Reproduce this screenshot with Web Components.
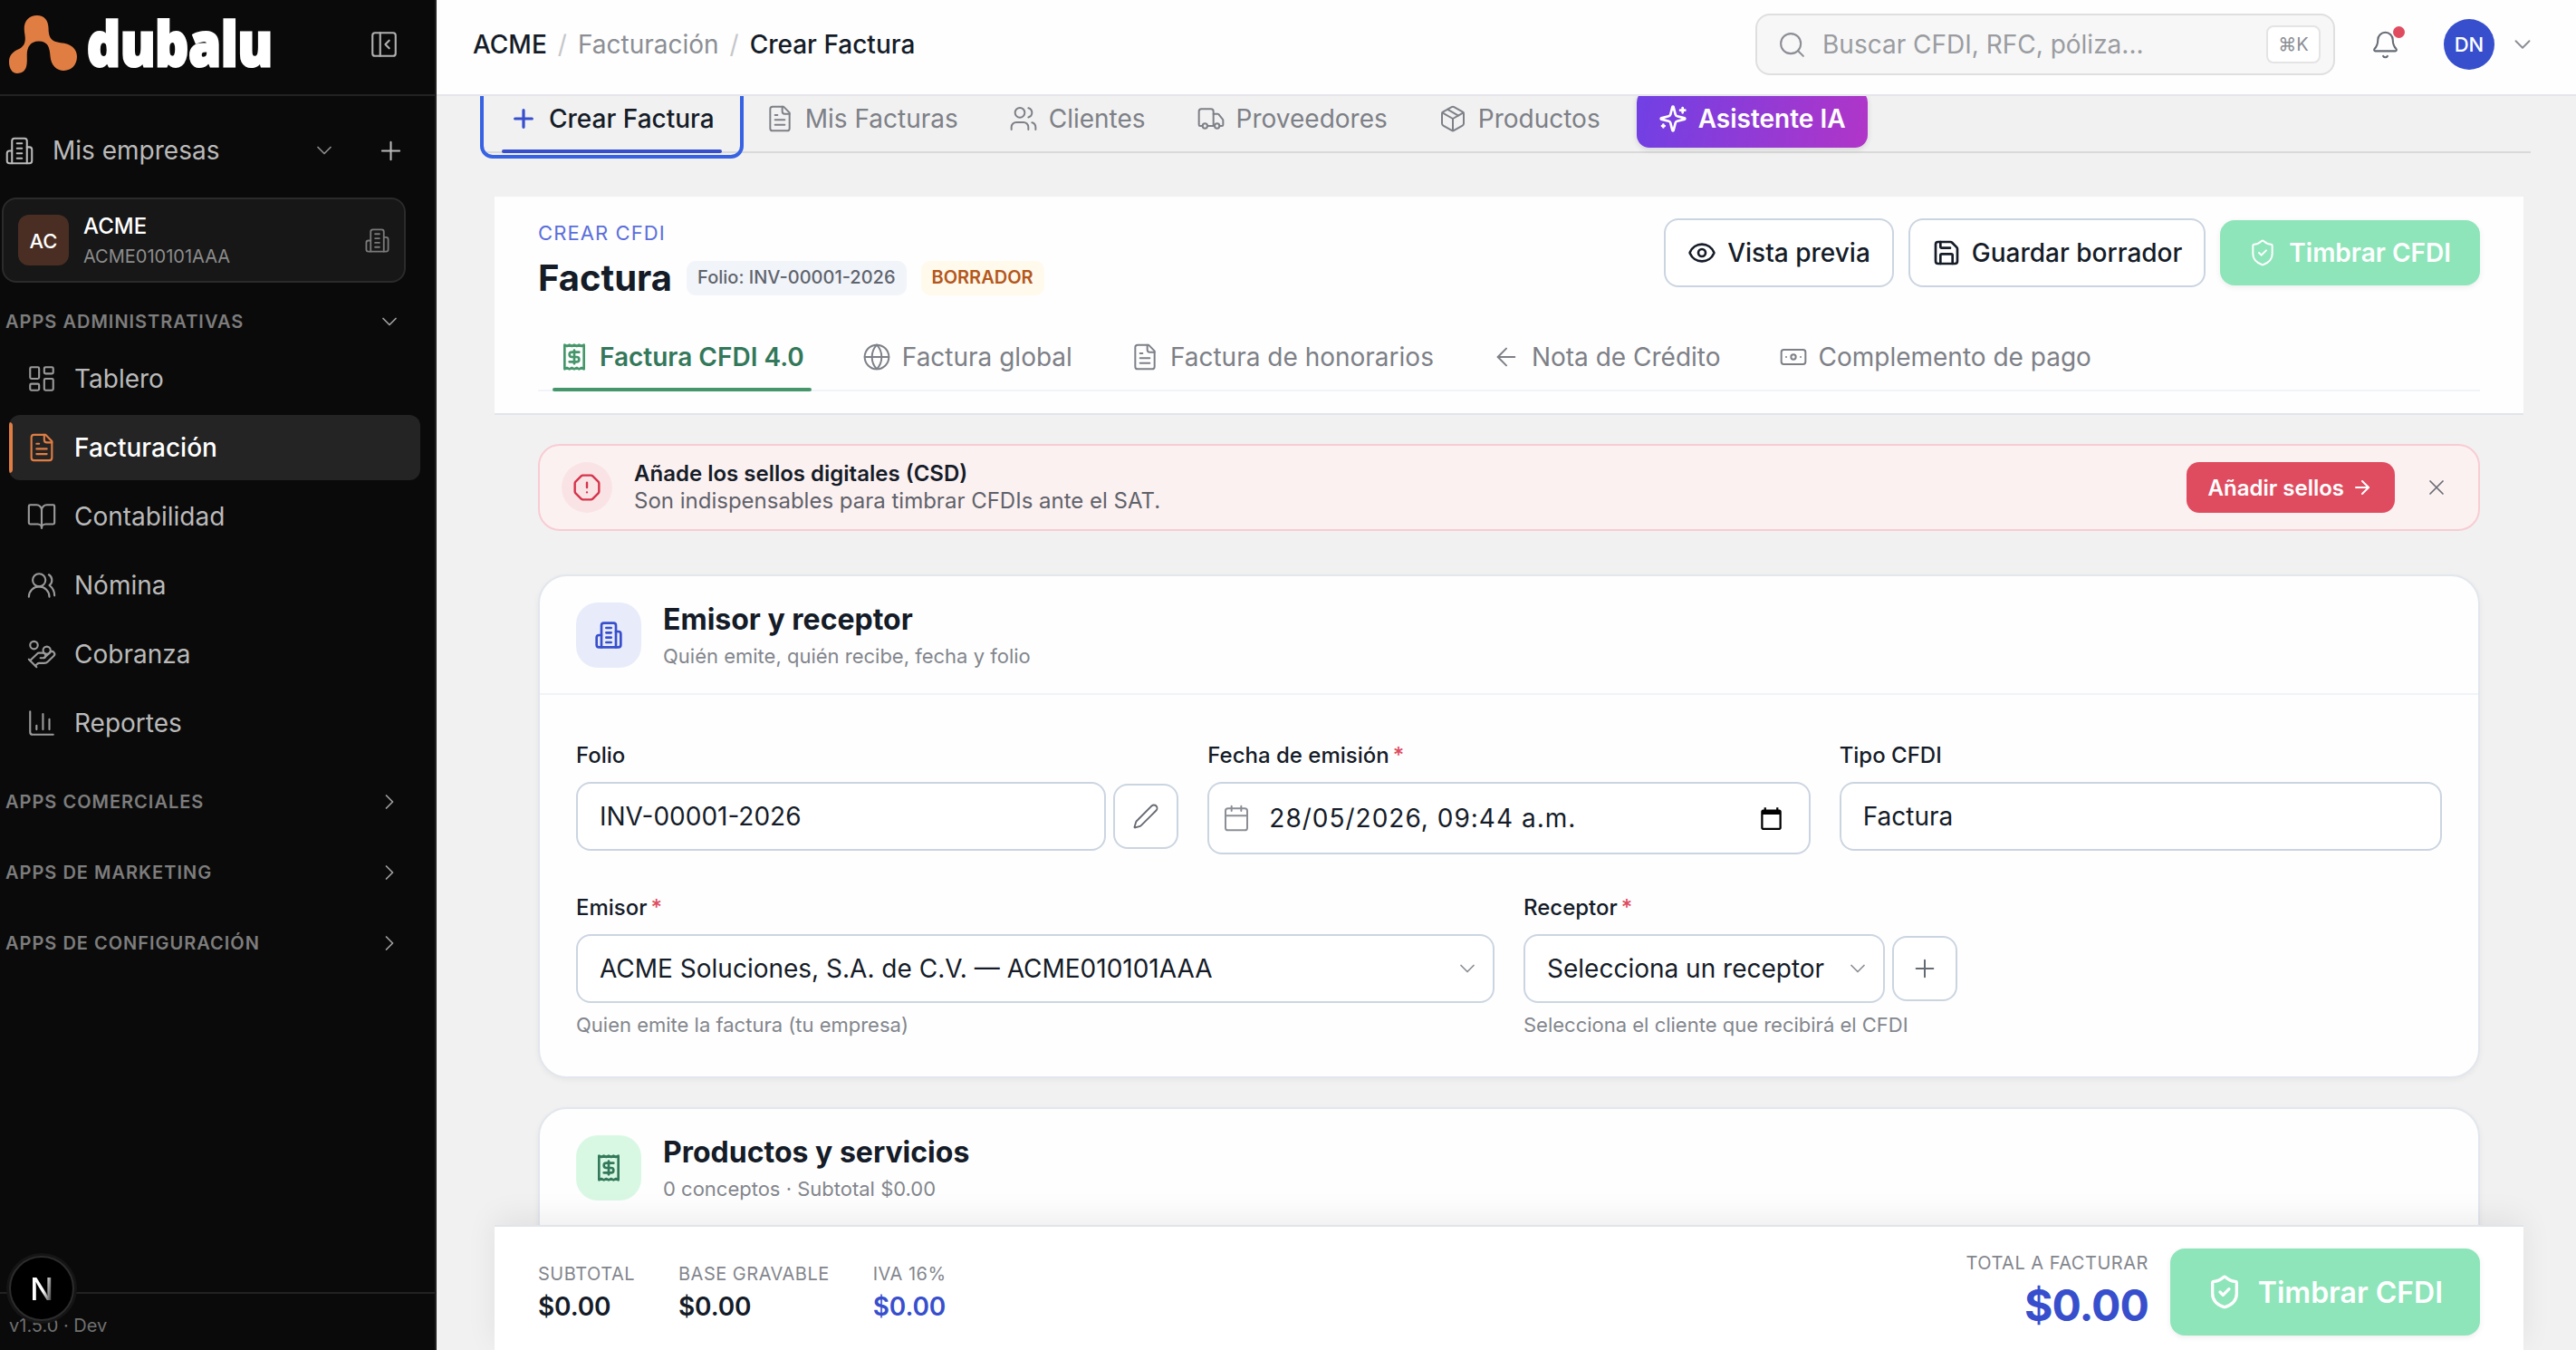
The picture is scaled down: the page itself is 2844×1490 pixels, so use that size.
<!DOCTYPE html>
<html lang="es">
<head>
<meta charset="utf-8">
<title>Crear Factura</title>
<style>
  body {
    margin: 0;
    width: 2844px;
    height: 1490px;
    overflow: hidden;
    font-family: Inter, "Liberation Sans", sans-serif;
    font-optical-sizing: none;
    font-size: 28px;
    color: #151c28;
    background: #f1f1f1;
  }
</style>
</head>
<body>
<invoice-app></invoice-app>

<script>
const ICONS = {
  building: '<path d="M6 22V4a2 2 0 0 1 2-2h8a2 2 0 0 1 2 2v18Z"/><path d="M6 12H4a2 2 0 0 0-2 2v6a2 2 0 0 0 2 2h2"/><path d="M18 9h2a2 2 0 0 1 2 2v9a2 2 0 0 1-2 2h-2"/><path d="M10 6h4M10 10h4M10 14h4M10 18h4"/>',
  panel: '<rect width="18" height="18" x="3" y="3" rx="2"/><path d="M9 3v18"/><path d="m16 15-3-3 3-3"/>',
  down: '<path d="m6 9 6 6 6-6"/>',
  right: '<path d="m9 18 6-6-6-6"/>',
  plus: '<path d="M5 12h14M12 5v14"/>',
  x: '<path d="M18 6 6 18M6 6l12 12"/>',
  dashboard: '<rect width="7" height="9" x="3" y="3" rx="1"/><rect width="7" height="5" x="14" y="3" rx="1"/><rect width="7" height="9" x="14" y="12" rx="1"/><rect width="7" height="5" x="3" y="16" rx="1"/>',
  file: '<path d="M15 2H6a2 2 0 0 0-2 2v16a2 2 0 0 0 2 2h12a2 2 0 0 0 2-2V7Z"/><path d="M14 2v4a2 2 0 0 0 2 2h4"/><path d="M10 9H8M16 13H8M16 17H8"/>',
  book: '<path d="M12 7v14"/><path d="M3 18a1 1 0 0 1-1-1V4a1 1 0 0 1 1-1h5a4 4 0 0 1 4 4 4 4 0 0 1 4-4h5a1 1 0 0 1 1 1v13a1 1 0 0 1-1 1h-6a3 3 0 0 0-3 3 3 3 0 0 0-3-3z"/>',
  people: '<path d="M18 21a8 8 0 0 0-16 0"/><circle cx="10" cy="8" r="5"/><path d="M22 20c0-3.37-2-6.5-4-8a5 5 0 0 0-.45-8.3"/>',
  coins: '<path d="M11 15h2a2 2 0 1 0 0-4h-3c-.6 0-1.1.2-1.4.6L3 17"/><path d="m7 21 1.6-1.4c.3-.4.8-.6 1.4-.6h4c1.1 0 2.1-.4 2.8-1.2l4.6-4.4a2 2 0 0 0-2.75-2.91l-4.2 3.9"/><path d="m2 16 6 6"/><circle cx="16" cy="9" r="2.9"/><circle cx="6" cy="5" r="3"/>',
  chart: '<path d="M3 3v16a2 2 0 0 0 2 2h16"/><path d="M18 17V9M13 17V5M8 17v-3"/>',
  search: '<path d="m21 21-4.34-4.34"/><circle cx="11" cy="11" r="8"/>',
  bell: '<path d="M10.268 21a2 2 0 0 0 3.464 0"/><path d="M3.262 15.326A1 1 0 0 0 4 17h16a1 1 0 0 0 .74-1.673C19.41 13.956 18 12.499 18 8A6 6 0 0 0 6 8c0 4.499-1.411 5.956-2.738 7.326"/>',
  users: '<path d="M16 21v-2a4 4 0 0 0-4-4H6a4 4 0 0 0-4 4v2"/><circle cx="9" cy="7" r="4"/><path d="M22 21v-2a4 4 0 0 0-3-3.87"/><path d="M16 3.13a4 4 0 0 1 0 7.75"/>',
  truck: '<path d="M14 18V6a2 2 0 0 0-2-2H4a2 2 0 0 0-2 2v11a1 1 0 0 0 1 1h2"/><path d="M15 18H9"/><path d="M19 18h2a1 1 0 0 0 1-1v-3.65a1 1 0 0 0-.22-.624l-3.48-4.35A1 1 0 0 0 17.52 8H14"/><circle cx="17" cy="18" r="2"/><circle cx="7" cy="18" r="2"/>',
  box: '<path d="M11 21.73a2 2 0 0 0 2 0l7-4A2 2 0 0 0 21 16V8a2 2 0 0 0-1-1.73l-7-4a2 2 0 0 0-2 0l-7 4A2 2 0 0 0 3 8v8a2 2 0 0 0 1 1.73z"/><path d="M12 22V12"/><path d="M3.29 7 12 12l8.71-5"/><path d="m7.5 4.27 9 5.15"/>',
  sparkles: '<path d="M9.937 15.5A2 2 0 0 0 8.5 14.063l-6.135-1.582a.5.5 0 0 1 0-.962L8.5 9.936A2 2 0 0 0 9.937 8.5l1.582-6.135a.5.5 0 0 1 .963 0L14.063 8.5A2 2 0 0 0 15.5 9.937l6.135 1.581a.5.5 0 0 1 0 .964L15.5 14.063a2 2 0 0 0-1.437 1.437l-1.582 6.135a.5.5 0 0 1-.963 0z"/><path d="M20 3v4M22 5h-4M4 17v2M5 18H3"/>',
  eye: '<path d="M2.062 12.348a1 1 0 0 1 0-.696 10.75 10.75 0 0 1 19.876 0 1 1 0 0 1 0 .696 10.75 10.75 0 0 1-19.876 0"/><circle cx="12" cy="12" r="3"/>',
  save: '<path d="M15.2 3a2 2 0 0 1 1.4.6l3.8 3.8a2 2 0 0 1 .6 1.4V19a2 2 0 0 1-2 2H5a2 2 0 0 1-2-2V5a2 2 0 0 1 2-2z"/><path d="M17 21v-7a1 1 0 0 0-1-1H8a1 1 0 0 0-1 1v7"/><path d="M7 3v4a1 1 0 0 0 1 1h7"/>',
  shield: '<path d="M20 13c0 5-3.5 7.5-7.66 8.95a1 1 0 0 1-.67-.01C7.5 20.5 4 18 4 13V6a1 1 0 0 1 1-1c2 0 4.5-1.2 6.24-2.72a1.17 1.17 0 0 1 1.52 0C14.51 3.81 17 5 19 5a1 1 0 0 1 1 1z"/><path d="m9 12 2 2 4-4"/>',
  receipt: '<path d="M4 2v20l2-1 2 1 2-1 2 1 2-1 2 1 2-1 2 1V2l-2 1-2-1-2 1-2-1-2 1-2-1-2 1Z"/><path d="M16 8h-6a2 2 0 1 0 0 4h4a2 2 0 1 1 0 4H8"/><path d="M12 17.5v-11"/>',
  globe: '<circle cx="12" cy="12" r="10"/><path d="M12 2a14.5 14.5 0 0 0 0 20 14.5 14.5 0 0 0 0-20"/><path d="M2 12h20"/>',
  back: '<path d="m12 19-7-7 7-7"/><path d="M19 12H5"/>',
  forward: '<path d="M5 12h14"/><path d="m12 5 7 7-7 7"/>',
  banknote: '<rect width="20" height="12" x="2" y="6" rx="2"/><circle cx="12" cy="12" r="2"/><path d="M6 12h.01M18 12h.01"/>',
  alert: '<path d="M12 16h.01M12 8v4"/><path d="M15.312 2a2 2 0 0 1 1.414.586l4.688 4.688A2 2 0 0 1 22 8.688v6.624a2 2 0 0 1-.586 1.414l-4.688 4.688a2 2 0 0 1-1.414.586H8.688a2 2 0 0 1-1.414-.586l-4.688-4.688A2 2 0 0 1 2 15.312V8.688a2 2 0 0 1 .586-1.414l4.688-4.688A2 2 0 0 1 8.688 2z"/>',
  pencil: '<path d="M21.174 6.812a1 1 0 0 0-3.986-3.987L3.842 16.174a2 2 0 0 0-.5.83l-1.321 4.352a.5.5 0 0 0 .623.622l4.353-1.32a2 2 0 0 0 .83-.497z"/>',
  calendar: '<path d="M8 2v4M16 2v4"/><rect width="18" height="18" x="3" y="4" rx="2"/><path d="M3 10h18"/>',
  picker: '<path fill="currentColor" stroke="none" d="M20 3h-1V1h-2v2H7V1H5v2H4c-1.1 0-2 .9-2 2v16c0 1.1.9 2 2 2h16c1.1 0 2-.9 2-2V5c0-1.1-.9-2-2-2zm0 18H4V8h16v13z"/>'
};

// Small helper so each element is just a name, its styles and its markup
function define(name, css, html) {
  customElements.define(name, class extends HTMLElement {
    connectedCallback() {
      if (this.shadowRoot) return;
      const root = this.attachShadow({ mode: 'open' });
      const attr = (key, fallback = '') => this.getAttribute(key) || fallback;
      root.innerHTML = `<style>*{box-sizing:border-box}:host{box-sizing:border-box}${css}</style>${typeof html === 'function' ? html(attr, this) : html}`;
    }
  });
}

define('ui-icon', `
  :host { display: inline-flex; flex: none; }
  svg { display: block; fill: none; stroke: currentColor; stroke-linecap: round; stroke-linejoin: round; }
`, (attr) => `<svg width="${attr('size', '32')}" height="${attr('size', '32')}" viewBox="0 0 24 24" stroke-width="${attr('weight', '1.5')}">${ICONS[attr('name')]}</svg>`);

/* ---------- Sidebar ---------- */

define('brand-logo', `
  :host { display: flex; align-items: center; gap: 8px; height: 104px; }
  svg { display: block; }
  .mark { margin-top: -7px; }
  text { font: 800 67px "Open Sans", sans-serif; fill: #fff; stroke: #fff; stroke-width: 3px; }
`, `
  <svg class="mark" width="75" height="64" viewBox="30 50 224 191"><path fill="#e07d43" d="M122 50C147 50 160 68 160 92C160 125 170 137 200 140C235 143 254 160 254 186C254 214 235 232 211 232C185 232 168 212 166 185C164 155 158 135 128 135C100 135 89 155 89 180C89 195 90 205 87 218C83 235 70 241 57 241C40 241 30 225 30 203C30 182 42 170 60 162C80 152 84 140 83 122C82 110 80 105 80 92C80 68 97 50 122 50Z"/></svg>
  <svg width="216" height="104" viewBox="0 0 216 104"><text x="3" y="73" textLength="205" lengthAdjust="spacingAndGlyphs">dubalu</text></svg>
`);

define('company-card', `
  :host { display: flex; align-items: center; width: 446px; height: 94px; padding: 0 15px 0 16px; margin: 22px 0 0 2px; background: #171717; border: 2px solid #2b2b2b; border-radius: 16px; }
  .avatar { width: 56px; height: 56px; border-radius: 12px; background: #4a2e23; color: #fff; font-size: 22px; font-weight: 500; line-height: 58px; text-align: center; }
  .info { flex: 1; margin-left: 16px; padding-top: 3px; }
  .name { font-size: 24px; font-weight: 500; line-height: 32px; color: #fff; }
  .rfc { font-size: 20px; line-height: 34px; color: #8c8c8c; }
  ui-icon { color: #7a7a7a; }
`, `
  <div class="avatar">AC</div>
  <div class="info"><div class="name">ACME</div><div class="rfc">ACME010101AAA</div></div>
  <ui-icon name="building" size="29"></ui-icon>
`);

define('nav-section', `
  :host { display: flex; align-items: center; justify-content: space-between; height: 44px; margin: 34px 36px 0 6px; font-size: 20px; font-weight: 600; letter-spacing: 1px; color: #7d7d7d; }
  ui-icon { color: #a0a0a0; }
`, (attr) => `<slot></slot><ui-icon name="${attr('icon', 'right')}" size="28"></ui-icon>`);

define('nav-item', `
  :host { display: flex; align-items: center; position: relative; height: 72px; margin: 0 16px 4px 10px; padding-left: 19px; gap: 19px; border-radius: 12px; color: #bababa; overflow: hidden; }
  ui-icon { color: #9a9a9a; }
  :host([active]) { background: #242424; color: #fff; font-weight: 500; }
  :host([active]) ui-icon { color: #e07d43; }
  :host([active])::before { content: ""; position: absolute; left: 0; top: 8px; width: 4px; height: 56px; background: #e07d43; border-radius: 0 4px 4px 0; }
`, (attr) => `<ui-icon name="${attr('icon')}" size="34"></ui-icon><span><slot></slot></span>`);

define('app-sidebar', `
  :host { display: flex; flex-direction: column; position: relative; flex: none; width: 482px; height: 1490px; background: #0a0a0a; border-right: 2px solid #222; }
  .head { display: flex; align-items: center; justify-content: space-between; height: 106px; padding: 0 39px 0 10px; border-bottom: 2px solid #222; color: #b0b0b0; }
  .head ui-icon { margin-top: -6px; }
  .mine { display: flex; align-items: center; height: 60px; margin-top: 30px; padding: 0 32px 0 5px; color: #bababa; }
  .mine span { flex: 1; margin-left: 20px; }
  .mine .chev { margin-right: 43px; color: #8c8c8c; }
  nav { margin-top: 5px; }
  .version { height: 64px; margin-top: auto; padding: 17px 0 0 10px; border-top: 2px solid #222; font-size: 20px; line-height: 36px; color: #707070; }
  .dev { position: absolute; left: 10px; top: 1386px; width: 72px; height: 72px; border-radius: 50%; background: #000; border: 2px solid #2c2c2c; box-shadow: 0 0 0 3px #151515; font-size: 34px; font-weight: 500; line-height: 69px; text-align: center; }
  .dev span { background: linear-gradient(100deg, #fff 55%, #555 85%); -webkit-background-clip: text; background-clip: text; color: transparent; }
`, `
  <div class="head"><brand-logo></brand-logo><ui-icon name="panel" size="34"></ui-icon></div>
  <div class="mine"><ui-icon name="building" size="33"></ui-icon><span>Mis empresas</span><ui-icon class="chev" name="down" size="28"></ui-icon><ui-icon name="plus" size="33"></ui-icon></div>
  <company-card></company-card>
  <nav-section icon="down" style="margin-top:21px">APPS ADMINISTRATIVAS</nav-section>
  <nav>
    <nav-item icon="dashboard">Tablero</nav-item>
    <nav-item icon="file" active>Facturación</nav-item>
    <nav-item icon="book">Contabilidad</nav-item>
    <nav-item icon="people">Nómina</nav-item>
    <nav-item icon="coins">Cobranza</nav-item>
    <nav-item icon="chart">Reportes</nav-item>
  </nav>
  <nav-section style="margin-top:25px">APPS COMERCIALES</nav-section>
  <nav-section>APPS DE MARKETING</nav-section>
  <nav-section>APPS DE CONFIGURACIÓN</nav-section>
  <div class="version">v1.5.0 · Dev</div>
  <div class="dev"><span>N</span></div>
`);

/* ---------- Top bar ---------- */

define('app-topbar', `
  :host { display: flex; align-items: center; position: relative; z-index: 3; flex: none; height: 106px; padding: 0 44px 6px 40px; background: #fefefe; border-bottom: 2px solid #e4e6ea; }
  .crumbs { display: flex; gap: 12px; flex: 1; font-weight: 500; }
  .crumbs i { font-style: normal; font-weight: 400; color: #c4c6ca; }
  .crumbs .mid { font-weight: 400; color: #8b8e94; }
  .search { display: flex; align-items: center; width: 640px; height: 68px; padding: 0 14px 0 22px; background: #f7f7f7; border: 2px solid #dfdfdf; border-radius: 16px; color: #9a9ca1; }
  .search span { flex: 1; margin-left: 17px; }
  .search ui-icon { color: #8b8e94; }
  kbd { width: 60px; height: 42px; border: 2px solid #e4e4e4; border-radius: 8px; background: #fff; font: 20px/38px Inter, "DejaVu Sans", sans-serif; text-align: center; color: #8b8e94; }
  .bell { position: relative; display: flex; margin-left: 39px; color: #666b75; }
  .bell::after { content: ""; position: absolute; right: -5px; top: -4px; width: 13px; height: 13px; border-radius: 50%; background: #e04c5f; }
  .avatar { width: 56px; height: 56px; margin: 0 16px 0 48px; border-radius: 50%; background: #374fcd; color: #fff; font-size: 22px; font-weight: 500; line-height: 56px; text-align: center; }
  .chev { color: #8b8e94; }
`, `
  <div class="crumbs"><span>ACME</span><i>/</i><span class="mid">Facturación</span><i>/</i><span>Crear Factura</span></div>
  <div class="search"><ui-icon name="search" size="33"></ui-icon><span>Buscar CFDI, RFC, póliza...</span><kbd>⌘K</kbd></div>
  <div class="bell"><ui-icon name="bell" size="33"></ui-icon></div>
  <div class="avatar">DN</div>
  <ui-icon class="chev" name="down" size="30"></ui-icon>
`);

/* ---------- Module tabs ---------- */

define('module-tab', `
  :host { display: flex; align-items: center; position: relative; height: 72px; padding: 0 28px; gap: 12px; color: #7d8087; }
  :host([active]) { color: #151c28; font-weight: 500; }
  :host([active]) ui-icon { color: #374fcd; }
  :host([active])::before { content: ""; position: absolute; left: 20px; right: 20px; bottom: -2px; height: 4px; border-radius: 2px; background: #374fcd; }
  /* keyboard focus ring */
  :host([active])::after { content: ""; position: absolute; left: -4px; right: -4px; top: -8px; bottom: -8px; border: 4px solid #3662e3; border-radius: 14px; }
`, (attr) => `<ui-icon name="${attr('icon')}" weight="${attr('weight', '1.5')}"></ui-icon><span><slot></slot></span>`);

define('module-tabs', `
  :host { display: flex; align-items: center; height: 74px; margin: -11px 50px 0 52px; border-bottom: 2px solid #d9d9d9; }
  .ai { display: flex; align-items: center; gap: 12px; height: 64px; margin-left: 12px; padding: 0 24px; border-radius: 14px; color: #fff; font-weight: 600; background: linear-gradient(100deg, #7040e4, #b135c8); box-shadow: 0 2px 6px rgba(0,0,0,.12); }
`, `
  <module-tab icon="plus" weight="2.4" active>Crear Factura</module-tab>
  <module-tab icon="file">Mis Facturas</module-tab>
  <module-tab icon="users">Clientes</module-tab>
  <module-tab icon="truck">Proveedores</module-tab>
  <module-tab icon="box">Productos</module-tab>
  <div class="ai"><ui-icon name="sparkles" weight="2"></ui-icon><span>Asistente IA</span></div>
`);

/* ---------- Page header ---------- */

define('ui-button', `
  :host { display: flex; align-items: center; flex: none; gap: 12px; height: 76px; padding: 0 24px; border: 2px solid #cbd5e1; border-radius: 16px; background: #fff; font-weight: 500; white-space: nowrap; }
  :host([kind="stamp"]) { gap: 13px; height: 72px; padding: 0 32px 0 31px; border: 0; background: #8ee5ba; color: #fff; font-weight: 600; box-shadow: 0 2px 6px rgba(0,0,0,.07); }
  :host([kind="stamp"][large]) { gap: 17px; height: 96px; padding: 0 41px 0 40px; font-size: 32px; }
`, (attr) => `<ui-icon name="${attr('icon')}" size="${attr('icon-size', '32')}" weight="${attr('weight', '2')}"></ui-icon><span><slot></slot></span>`);

define('sub-tab', `
  :host { display: flex; align-items: center; position: relative; height: 76px; padding: 0 8px; gap: 12px; color: #7d8087; }
  :host([active]) { color: #33785a; font-weight: 600; }
  :host([active]) ui-icon { color: #45976b; }
  :host([active])::after { content: ""; position: absolute; left: 0; right: 0; bottom: 0; height: 4px; background: #45976b; border-radius: 2px; }
`, (attr) => `<ui-icon name="${attr('icon')}" weight="${attr('weight', '1.5')}"></ui-icon><span><slot></slot></span>`);

define('page-header', `
  :host { display: block; height: 241px; margin: 48px 58px 0 64px; padding: 24px 48px 0; background: #fefefe; border-bottom: 2px solid #e1e5ea; }
  .top { display: flex; align-items: flex-start; justify-content: space-between; }
  .eyebrow { font-size: 22px; line-height: 32px; letter-spacing: 1.1px; color: #5b6fdb; }
  .title { display: flex; align-items: center; height: 48px; margin-top: 10px; }
  h1 { margin: 0 16px 0 0; font-size: 40px; font-weight: 700; line-height: 48px; }
  .badge { height: 38px; padding: 0 12px; margin-right: 16px; border-radius: 10px; background: #f1f4f9; font-size: 20px; font-weight: 500; line-height: 37px; color: #5f646d; }
  .draft { background: #fffaeb; color: #b4571c; font-weight: 600; }
  .actions { display: flex; align-items: center; gap: 16px; }
  .tabs { display: flex; gap: 48px; height: 76px; margin-top: 25px; padding-left: 16px; box-shadow: inset 0 -2px #f0f4f8; }
`, `
  <div class="top">
    <div>
      <div class="eyebrow">CREAR CFDI</div>
      <div class="title"><h1>Factura</h1><span class="badge">Folio: INV-00001-2026</span><span class="badge draft">BORRADOR</span></div>
    </div>
    <div class="actions">
      <ui-button icon="eye">Vista previa</ui-button>
      <ui-button icon="save">Guardar borrador</ui-button>
      <ui-button kind="stamp" icon="shield" weight="1.5">Timbrar CFDI</ui-button>
    </div>
  </div>
  <div class="tabs">
    <sub-tab icon="receipt" weight="2" active>Factura CFDI 4.0</sub-tab>
    <sub-tab icon="globe">Factura global</sub-tab>
    <sub-tab icon="file">Factura de honorarios</sub-tab>
    <sub-tab icon="back">Nota de Crédito</sub-tab>
    <sub-tab icon="banknote">Complemento de pago</sub-tab>
  </div>
`);

define('alert-banner', `
  :host { display: flex; align-items: center; height: 96px; margin: 32px 106px 0 112px; padding: 0 32px 0 24px; background: #fcf1f1; border: 2px solid #f8ccd3; border-radius: 24px; font-size: 24px; }
  .mark { display: flex; align-items: center; justify-content: center; width: 56px; height: 56px; border-radius: 50%; background: #fae3e5; color: #d5344b; }
  .copy { flex: 1; margin-left: 24px; line-height: 30px; color: #5f626a; }
  .copy b { display: block; font-weight: 600; color: #151c28; }
  .add { display: flex; align-items: center; gap: 8px; height: 56px; padding: 0 24px; margin-right: 32px; border-radius: 14px; background: #e04c5f; color: #fff; font-weight: 600; }
  .close { color: #6a6d75; }
`, `
  <div class="mark"><ui-icon name="alert" weight="1.8"></ui-icon></div>
  <div class="copy"><b><slot name="title"></slot></b><slot></slot></div>
  <div class="add"><span>Añadir sellos</span><ui-icon name="forward" size="24" weight="2"></ui-icon></div>
  <ui-icon class="close" name="x" size="28"></ui-icon>
`);

/* ---------- Form ---------- */

define('form-card', `
  :host { display: block; margin: 48px 106px 0 112px; background: #fefefe; border: 2px solid #e2e7ed; border-radius: 32px; box-shadow: 0 2px 6px rgba(0,0,0,.05); }
  header { display: flex; align-items: center; height: 131px; padding: 0 40px; border-bottom: 2px solid #f0f4f9; }
  .tile { display: flex; align-items: center; justify-content: center; width: 72px; height: 72px; border-radius: 24px; background: #e8ebf9; color: #374fcd; }
  :host([tone="green"]) .tile { background: #d9f8e4; color: #33785a; }
  .heading { margin-left: 24px; padding-top: 3px; }
  h2 { margin: 0; font-size: 32px; font-weight: 700; line-height: 44px; }
  p { margin: 0; font-size: 22px; line-height: 37px; color: #83868d; }
  .body { padding: 48px 40px 40px; }
`, (attr) => `
  <header>
    <div class="tile"><ui-icon name="${attr('icon')}" weight="2"></ui-icon></div>
    <div class="heading"><h2><slot name="title"></slot></h2><p><slot name="hint"></slot></p></div>
  </header>
  <div class="body"><slot></slot></div>
`);

define('form-row', `
  :host { display: grid; grid-template-columns: repeat(var(--cols, 3), 1fr); gap: 32px; align-items: start; }
  :host(:not(:first-of-type)) { margin-top: 40px; }
`, `<slot></slot>`);

define('form-field', `
  :host { display: block; }
  label { display: block; margin-bottom: 11px; padding-top: 1px; font-size: 24px; font-weight: 500; line-height: 36px; }
  label span { margin-left: 4px; color: #e04c5f; }
  .line { display: flex; align-items: center; gap: 8px; }
  .help { margin-top: 7px; font-size: 22px; line-height: 34px; color: #83868d; }
`, (attr, el) => `
  <label>${attr('label')}${el.hasAttribute('required') ? '<span>*</span>' : ''}</label>
  <div class="line"><slot></slot></div>
  ${attr('help') ? `<div class="help">${attr('help')}</div>` : ''}
`);

define('text-box', `
  :host { display: flex; align-items: center; flex: 1; height: 76px; padding: 0 14px 0 24px; border: 2px solid #cbd5e1; border-radius: 16px; background: #fff; }
  span { flex: 1; white-space: pre; }
  ui-icon { color: #8b8e94; }
  :host([date]) { height: 80px; padding: 0 28px 0 14px; letter-spacing: 1px; }
  :host([date]) span { margin-left: 20px; }
  :host([date]) .picker { color: #000; }
`, (attr, el) => el.hasAttribute('date')
  ? `<ui-icon name="calendar"></ui-icon><span><slot></slot></span><ui-icon class="picker" name="picker" size="27"></ui-icon>`
  : `<span><slot></slot></span>${el.hasAttribute('select') ? '<ui-icon name="down" size="28"></ui-icon>' : ''}`);

define('icon-button', `
  :host { display: flex; align-items: center; justify-content: center; flex: none; width: 72px; height: 72px; border: 2px solid #cbd5e1; border-radius: 16px; background: #fff; color: #666a72; }
`, (attr) => `<ui-icon name="${attr('icon')}" size="${attr('size', '30')}"></ui-icon>`);

/* ---------- Totals ---------- */

define('total-item', `
  :host { display: block; padding-top: 13px; }
  .label { font-size: 20px; line-height: 30px; letter-spacing: .5px; color: #83868d; }
  .value { margin-top: 1px; font-weight: 600; line-height: 40px; letter-spacing: -.1px; }
  :host([accent]) .value { color: #374fcd; }
  :host([large]) { padding-top: 1px; text-align: right; }
  :host([large]) .value { font-size: 48px; font-weight: 700; line-height: 60px; margin-top: 2px; letter-spacing: -1px; }
`, (attr) => `<div class="label">${attr('label')}</div><div class="value"><slot></slot></div>`);

define('totals-bar', `
  :host { display: flex; align-items: flex-start; position: relative; z-index: 2; flex: none; height: 138px; margin: 0 58px 0 64px; padding: 24px 48px 0; gap: 48px; background: #fff; border-top: 2px solid #e1e5ea; box-shadow: 0 -8px 32px rgba(0,0,0,.07); }
  .due { display: flex; gap: 24px; margin-left: auto; }
`, `
  <total-item label="SUBTOTAL">$0.00</total-item>
  <total-item label="BASE GRAVABLE">$0.00</total-item>
  <total-item label="IVA 16%" accent>$0.00</total-item>
  <div class="due">
    <total-item label="TOTAL A FACTURAR" accent large>$0.00</total-item>
    <ui-button kind="stamp" large icon="shield" icon-size="40">Timbrar CFDI</ui-button>
  </div>
`);

define('invoice-app', `
  :host { display: flex; width: 2844px; height: 1490px; }
  main { display: flex; flex-direction: column; flex: 1; min-width: 0; }
  .content { flex: 1; min-height: 0; overflow: hidden; }
`, `
  <app-sidebar></app-sidebar>
  <main>
    <app-topbar></app-topbar>
    <div class="content">
      <module-tabs></module-tabs>
      <page-header></page-header>
      <alert-banner><span slot="title">Añade los sellos digitales (CSD)</span>Son indispensables para timbrar CFDIs ante el SAT.</alert-banner>
      <form-card icon="building">
        <span slot="title">Emisor y receptor</span>
        <span slot="hint">Quién emite, quién recibe, fecha y folio</span>
        <form-row>
          <form-field label="Folio"><text-box>INV-00001-2026</text-box><icon-button icon="pencil"></icon-button></form-field>
          <form-field label="Fecha de emisión" required><text-box date>28/05/2026, 09:44 a.m.</text-box></form-field>
          <form-field label="Tipo CFDI"><text-box>Factura</text-box></form-field>
        </form-row>
        <form-row style="--cols:2">
          <form-field label="Emisor" required help="Quien emite la factura (tu empresa)"><text-box select>ACME Soluciones, S.A. de C.V. — ACME010101AAA</text-box></form-field>
          <form-field label="Receptor" required help="Selecciona el cliente que recibirá el CFDI"><text-box select style="flex:0 0 399px">Selecciona un receptor</text-box><icon-button icon="plus" size="32"></icon-button></form-field>
        </form-row>
      </form-card>
      <form-card icon="receipt" tone="green" style="margin-top:32px">
        <span slot="title">Productos y servicios</span>
        <span slot="hint">0 conceptos · Subtotal $0.00</span>
      </form-card>
    </div>
    <totals-bar></totals-bar>
  </main>
`);
</script>
</body>
</html>
